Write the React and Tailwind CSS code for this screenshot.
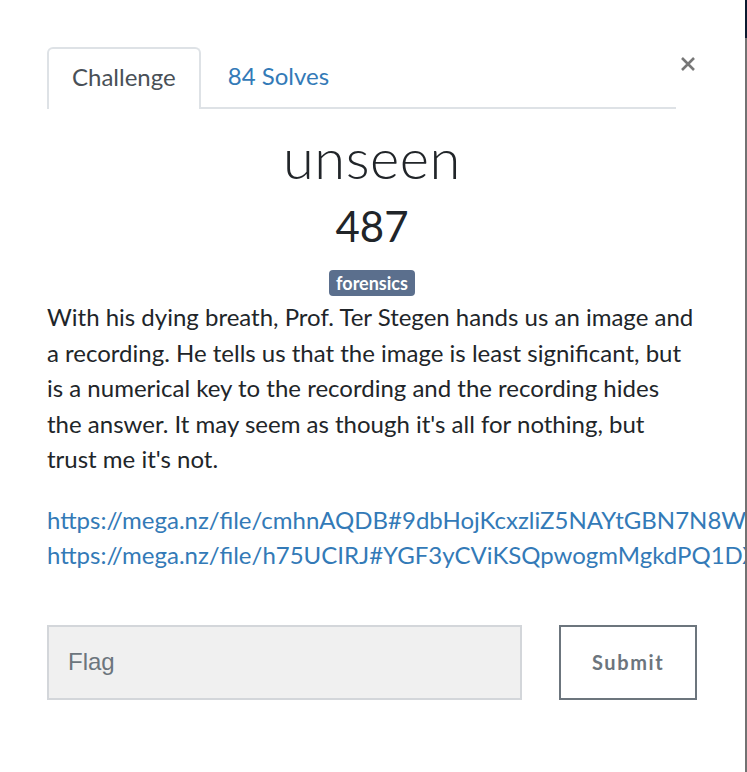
import React from "react";

const links = [
  "https://mega.nz/file/cmhnAQDB#9dbHojKcxzliZ5NAYtGBN7N8WqkV0Pp5lOxvJpQ",
  "https://mega.nz/file/h75UCIRJ#YGF3yCViKSQpwogmMgkdPQ1DXw8zqkO1yVrJmQ",
];

function CloseIcon() {
  return (
    <svg width="16" height="16" viewBox="0 0 16 16" className="block">
      <path d="M2 2 L14 14 M14 2 L2 14" stroke="#777" strokeWidth="2.6" strokeLinecap="butt" />
    </svg>
  );
}

export default function App() {
  return (
    <div className="min-h-screen bg-white flex font-['Lato','Open_Sans',sans-serif] text-[#212529] overflow-hidden">
      <main className="flex-1 min-w-0 pl-[47px] pr-[48px] pt-[47px]">
        {/* tabs + close */}
        <div className="flex items-start">
          <ul className="flex flex-1 border-b-2 border-[#dee2e6]">
            <li className="-mb-[2px] h-[62px] px-[23px] pb-[5px] flex items-center border-2 border-b-0 border-[#dee2e6] rounded-t-[6px] bg-white text-[24px] text-[#495057]">
              Challenge
            </li>
            <li className="h-[60px] px-[27px] pb-[2px] flex items-center text-[24px] text-[#337ab7]">
              84 Solves
            </li>
          </ul>
          <button className="ml-[3px] mt-[9px] w-[18px] flex justify-center">
            <CloseIcon />
          </button>
        </div>

        {/* title block */}
        <div className="flex flex-col items-center mt-[17px]">
          <h2 className="font-light text-[56px] leading-[64px] tracking-[0.01em] text-[#212529]">unseen</h2>
          <h4 className="text-[42px] leading-[52px] mt-[10px]">487</h4>
          <span className="mt-[18px] h-[26px] px-[7px] rounded-[4px] bg-[#5b6f8d] text-white font-bold text-[18px] leading-[26px]">
            forensics
          </span>
        </div>

        <p className="mt-[3px] text-[24px] leading-[35.5px]">
          With his dying breath, Prof. Ter Stegen hands us an image and a recording. He tells us that the image is least
          significant, but is a numerical key to the recording and the recording hides the answer. It may seem as though
          it's all for nothing, but trust me it's not.
        </p>

        <div className="mt-[25px] flex flex-col text-[24px] leading-[35.5px] text-[#337ab7] whitespace-nowrap">
          {links.map((l) => (
            <a key={l} href="#">{l}</a>
          ))}
        </div>

        {/* flag form */}
        <div className="mt-[52px] flex items-stretch gap-[37px]">
          <input
            type="text"
            placeholder="Flag"
            className="w-[476px] h-[75px] bg-[#f0f0f0] border-2 border-[#d3d6da] px-[19px] text-[24px] font-['Liberation_Sans',Arial,sans-serif] placeholder:text-[#6c757d] outline-none"
          />
          <button className="w-[138px] h-[75px] border-2 border-[#6c757d] bg-white text-[#6c757d] font-bold text-[20px] tracking-[0.08em]">
            Submit
          </button>
        </div>
      </main>
      <div className="w-[2px] flex flex-col shrink-0">
        <div className="h-[38px] bg-[#0b1a30]" />
        <div className="flex-1 bg-[#727272]" />
      </div>
    </div>
  );
}
